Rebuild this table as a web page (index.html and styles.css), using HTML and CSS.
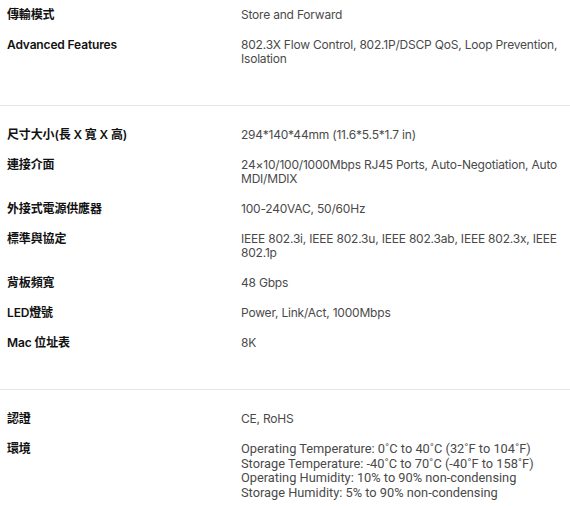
FILE: index.html
```html
<!DOCTYPE html>
<html lang="zh-Hant">

<head>
    <meta charset="UTF-8">
    <meta name="viewport" content="width=device-width, initial-scale=1.0">
    <title>規格</title>
    <link rel="stylesheet" href="styles.css">
</head>

<body>
    <div class="spec-group">
        <div class="spec-row">
            <div class="spec-name">傳輸模式</div>
            <div class="spec-value">Store and Forward</div>
        </div>
        <div class="spec-row">
            <div class="spec-name">Advanced Features</div>
            <div class="spec-value">802.3X Flow Control, 802.1P/DSCP QoS, Loop Prevention, Isolation</div>
        </div>
    </div>

    <div class="spec-group">
        <div class="spec-row">
            <div class="spec-name">尺寸大小(長 X 寬 X 高)</div>
            <div class="spec-value">294*140*44mm (11.6*5.5*1.7 in)</div>
        </div>
        <div class="spec-row">
            <div class="spec-name">連接介面</div>
            <div class="spec-value">24×10/100/1000Mbps RJ45 Ports, Auto-Negotiation, Auto MDI/MDIX</div>
        </div>
        <div class="spec-row">
            <div class="spec-name">外接式電源供應器</div>
            <div class="spec-value">100-240VAC, 50/60Hz</div>
        </div>
        <div class="spec-row">
            <div class="spec-name">標準與協定</div>
            <div class="spec-value">IEEE 802.3i, IEEE 802.3u, IEEE 802.3ab, IEEE 802.3x, IEEE 802.1p</div>
        </div>
        <div class="spec-row">
            <div class="spec-name">背板頻寬</div>
            <div class="spec-value">48 Gbps</div>
        </div>
        <div class="spec-row">
            <div class="spec-name">LED燈號</div>
            <div class="spec-value">Power, Link/Act, 1000Mbps</div>
        </div>
        <div class="spec-row">
            <div class="spec-name">Mac 位址表</div>
            <div class="spec-value">8K</div>
        </div>
    </div>

    <div class="spec-group">
        <div class="spec-row">
            <div class="spec-name">認證</div>
            <div class="spec-value">CE, RoHS</div>
        </div>
        <div class="spec-row">
            <div class="spec-name">環境</div>
            <div class="spec-value env">
                Operating Temperature: 0˚C to 40˚C (32˚F to 104˚F)<br>
                Storage Temperature: -40˚C to 70˚C (-40˚F to 158˚F)<br>
                Operating Humidity: 10% to 90% non-condensing<br>
                Storage Humidity: 5% to 90% non-condensing
            </div>
        </div>
    </div>
</body>

</html>
```

FILE: styles.css
```css
body {
    margin: 0;
    background: #fff;
    font-family: "Inter", "Noto Sans CJK TC", sans-serif;
    font-size: 12px;
    line-height: 14px;
    color: #4a4a4a;
}

.spec-group {
    display: flex;
    flex-direction: column;
    gap: 16px;
    padding: 22px 5px 39px 7px;
    border-bottom: 1px solid #e6e6e6;
}

.spec-group:first-child {
    padding-top: 8px;
}

.spec-group:last-child {
    padding-bottom: 4px;
    border-bottom: none;
}

.spec-row {
    display: grid;
    grid-template-columns: 234px 1fr;
}

.spec-name {
    font-weight: 600;
    letter-spacing: -0.15px;
    color: #111;
}

.spec-value {
    letter-spacing: -0.2px;
}

.spec-value.env {
    font-family: "Roboto", sans-serif;
    font-size: 12.8px;
    letter-spacing: 0;
    line-height: 14.7px;
}
```
